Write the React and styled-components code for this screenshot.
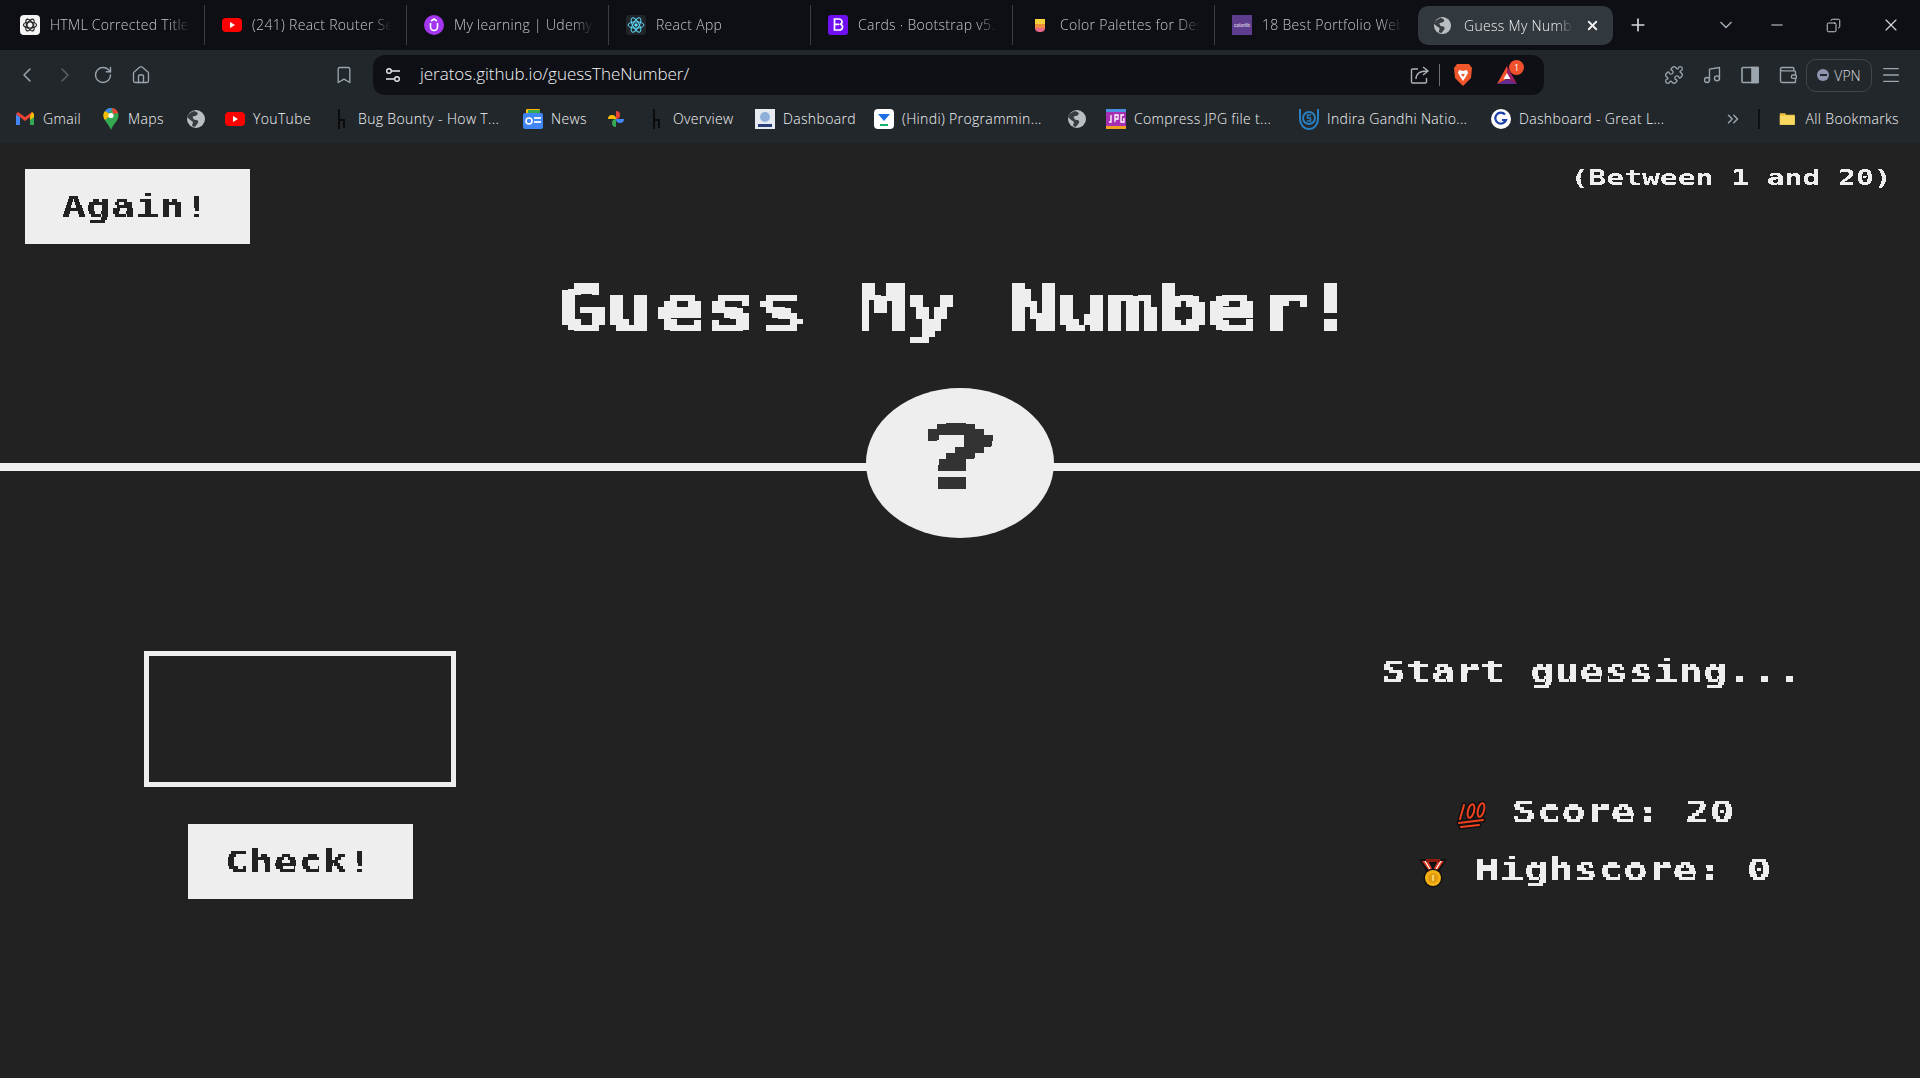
import React from "react";
import styled, { createGlobalStyle } from "styled-components";
import {
  ChevronLeft,
  ChevronRight,
  ChevronDown,
  ChevronsRight,
  RotateCw,
  Home,
  Bookmark,
  Puzzle,
  Music,
  Wallet,
  Menu,
  X,
  Plus,
  Minus,
  Copy,
} from "lucide-react";

const GlobalStyle = createGlobalStyle`
  html, body {
    margin: 0;
    padding: 0;
    background: #222;
    overflow: hidden;
  }
  * { box-sizing: border-box; }
`;

const pixelFont = `"DejaVu Sans Mono", "Liberation Mono", monospace`;
const uiFont = `"Open Sans", "Noto Sans", sans-serif`;

/* ---------- browser chrome ---------- */

const TabStrip = styled.div`
  height: 50px;
  background: #0d0f14;
  display: flex;
  align-items: center;
  padding-left: 3px;
`;

const Tab = styled.div`
  width: 202px;
  height: 40px;
  display: flex;
  align-items: center;
  gap: 10px;
  padding-left: 17px;
  padding-right: 14px;
  border-right: 1px solid ${(p) => (p.$last ? "transparent" : "#3a3f44")};
`;

const TabTitle = styled.span`
  font-family: ${uiFont};
  font-size: 14px;
  font-weight: 300;
  letter-spacing: 0.3px;
  line-height: 18px;
  color: #c4c8cc;
  white-space: nowrap;
  overflow: hidden;
  flex: 1;
  mask-image: linear-gradient(to right, #000 85%, transparent 100%);
`;

const ActiveTab = styled.div`
  width: 195px;
  height: 39px;
  margin-left: 1px;
  margin-top: 1px;
  border-radius: 10px;
  background: #31383e;
  display: flex;
  align-items: center;
  gap: 12px;
  padding: 0 13px 0 15px;
  ${TabTitle} {
    color: #f0f1f2;
  }
`;

const WindowControls = styled.div`
  flex: 1;
  display: flex;
  align-items: center;
  color: #d6d8da;
  padding-left: 14px;
`;

const WindowButton = styled.span`
  width: ${(p) => p.$w || 56}px;
  display: flex;
  justify-content: center;
  margin-left: ${(p) => p.$gap || 0}px;
`;

const Toolbar = styled.div`
  height: 50px;
  background: #22272b;
  display: flex;
  align-items: center;
  padding-left: 8px;
  color: #9aa5ad;
`;

const ToolButton = styled.span`
  width: 38px;
  height: 38px;
  display: flex;
  align-items: center;
  justify-content: center;
  flex: none;
  opacity: ${(p) => (p.$dim ? 0.45 : 1)};
`;

const BookmarkButton = styled(ToolButton)`
  margin-left: 165px;
  margin-right: 10px;
`;

const AddressBar = styled.div`
  width: 1171px;
  height: 40px;
  flex: none;
  border-radius: 12px;
  background: #0e1015;
  display: flex;
  align-items: center;
  padding: 0 26px 0 11px;
  color: #d4d6d8;
`;

const UrlText = styled.span`
  font-family: ${uiFont};
  font-size: 17px;
  font-weight: 300;
  letter-spacing: -0.03px;
  line-height: 22px;
  margin-top: -2px;
  color: #f4f5f6;
  padding-left: 18px;
  flex: 1;
`;

const AddressDivider = styled.span`
  width: 1px;
  height: 22px;
  background: #6a7076;
  margin: 0 13px 0 9px;
`;

const BatWrap = styled.span`
  position: relative;
  display: flex;
  margin-left: 23px;
`;

const BatBadge = styled.span`
  position: absolute;
  top: -5px;
  right: -6px;
  width: 15px;
  height: 15px;
  border-radius: 50%;
  background: #f0502c;
  color: #fff;
  font: 9px ${uiFont};
  display: flex;
  align-items: center;
  justify-content: center;
`;

const RightTools = styled.div`
  display: flex;
  align-items: center;
  padding-left: 111px;
`;

const VpnPill = styled.div`
  width: 66px;
  height: 33px;
  margin-left: -1px;
  border: 1px solid #3f464c;
  border-radius: 10px;
  display: flex;
  align-items: center;
  justify-content: center;
  gap: 5px;
  font: 300 14px ${uiFont};
  color: #d8dbde;
`;

const VpnDot = styled.span`
  width: 12px;
  height: 12px;
  border-radius: 50%;
  background: #8f94b0;
  display: flex;
  align-items: center;
  justify-content: center;
  &::after {
    content: "";
    width: 7px;
    height: 2px;
    background: #22272b;
  }
`;

const BookmarksBar = styled.div`
  height: 43px;
  background: #22272b;
  display: flex;
  align-items: center;
  padding: 0 0 5px 15px;
`;

const BookmarkItem = styled.div`
  width: ${(p) => p.$w}px;
  flex: none;
  display: flex;
  align-items: center;
  gap: ${(p) => p.$gap || 8}px;
`;

const BookmarkLabel = styled.span`
  font-family: ${uiFont};
  font-size: 14px;
  font-weight: 300;
  letter-spacing: 0.35px;
  line-height: 18px;
  color: #f4f5f6;
  white-space: nowrap;
`;

const OverflowButton = styled.span`
  margin-left: 52px;
  display: flex;
  color: #9aa5ad;
`;

const BarDivider = styled.span`
  width: 2px;
  height: 20px;
  background: #0e1015;
  margin: 0 19px 0 16px;
`;

/* ---------- the game ---------- */

/* no pixel font is installed: a bold mono is stretched to the wide pitch and
   then sampled into blocks by the filters in PixelFilters */
const Header = styled.header`
  height: 328px;
  border-bottom: 8px solid #eee;
  position: relative;
  padding-top: 26px;
`;

const TopRow = styled.div`
  display: flex;
  justify-content: space-between;
  align-items: flex-start;
  padding: 0 28px 0 25px;
`;

const Between = styled.p`
  margin: -3px 0 0;
  font: bold 21px ${pixelFont};
  color: #eee;
  white-space: nowrap;
  filter: url(#pixel-tiny);
  transform: scaleX(1.41);
  transform-origin: right center;
`;

const Title = styled.h1`
  margin: 27px auto 0;
  width: fit-content;
  font: bold 63px/76px ${pixelFont};
  color: #eee;
  white-space: nowrap;
  filter: url(#pixel-large);
  transform: translateX(-4px) scaleX(1.32);
`;

const Number = styled.div`
  position: absolute;
  left: 50%;
  bottom: -75px;
  width: 188px;
  height: 150px;
  margin-left: -94px;
  border-radius: 50%;
  background: #eee;
  display: flex;
  align-items: center;
  justify-content: center;
`;

const NumberMark = styled.span`
  font: bold 85px/1 ${pixelFont};
  color: #333;
  filter: url(#pixel-mark);
  transform: translate(-4px, -4px) scaleX(1.8);
`;

const PixelButton = styled.button`
  width: 225px;
  height: 75px;
  border: none;
  background: #eee;
  color: #222;
  padding: 0;
  font: bold 30px ${pixelFont};
  cursor: pointer;
  span {
    display: inline-block;
    filter: url(#pixel-small);
    transform: translateX(-2px) scaleX(1.36);
  }
`;

const Main = styled.main`
  display: grid;
  grid-template-columns: 600px 1fr 660px;
`;

const LeftColumn = styled.section`
  grid-column: 1;
  display: flex;
  flex-direction: column;
  align-items: center;
  padding-top: 180px;
  gap: 37px;
`;

const GuessInput = styled.input`
  width: 312px;
  height: 136px;
  border: 5px solid #eee;
  background: none;
  outline: none;
  color: #eee;
`;

const RightColumn = styled.section`
  grid-column: 3;
  display: flex;
  flex-direction: column;
  align-items: center;
  padding-top: 183px;
`;

const Message = styled.p`
  margin: 0 0 104px 4px;
  height: 36px;
  font: bold 30px/36px ${pixelFont};
  color: #eee;
  white-space: nowrap;
  filter: url(#pixel-small);
  transform: scaleX(1.37);
`;

const ScoreRow = styled.p`
  margin: 0 0 22px 10px;
  height: 36px;
  display: flex;
  align-items: center;
  justify-content: center;
  font: bold 30px/36px ${pixelFont};
  color: #eee;
  white-space: nowrap;
`;

const ScoreIcon = styled.svg`
  width: 30px;
  height: 30px;
  flex: none;
  margin-right: 26px;
  margin-top: 6px;
`;

const ScoreText = styled.span`
  display: inline-block;
  filter: url(#pixel-small);
  transform: scaleX(1.37);
  width: ${(p) => p.$w}px;
  text-align: center;
`;

const HiddenSvg = styled.svg`
  position: absolute;
  width: 0;
  height: 0;
`;

/* sample the text on a grid, threshold the samples, then grow each to a block */
const PixelFilter = ({ id, cellX, cellY, dotX, dotY, radiusX, radiusY }) => (
  <filter id={id} x="-5%" y="-5%" width="110%" height="110%" colorInterpolationFilters="sRGB">
    <feFlood x="2" y="2" width={dotX} height={dotY} floodColor="#000" />
    <feComposite width={cellX} height={cellY} />
    <feTile result="grid" />
    <feComposite in="SourceGraphic" in2="grid" operator="in" />
    <feComponentTransfer>
      <feFuncA type="discrete" tableValues="0 0 1 1" />
    </feComponentTransfer>
    <feMorphology operator="dilate" radius={`${radiusX} ${radiusY}`} />
  </filter>
);

const PixelFilters = () => (
  <HiddenSvg aria-hidden="true">
    <PixelFilter id="pixel-large" cellX={5} cellY={6} dotX={1} dotY={2} radiusX={2} radiusY={2} />
    <PixelFilter id="pixel-small" cellX={2} cellY={3} dotX={2} dotY={1} radiusX={0.01} radiusY={1} />
    <PixelFilter id="pixel-tiny" cellX={2} cellY={2} dotX={2} dotY={2} radiusX={0.01} radiusY={0.01} />
    <PixelFilter id="pixel-mark" cellX={6} cellY={6} dotX={2} dotY={2} radiusX={2} radiusY={2} />
  </HiddenSvg>
);

/* ---------- favicons ---------- */

const GlobeIcon = ({ size = 20 }) => (
  <svg width={size} height={size} viewBox="0 0 20 20">
    <circle cx="10" cy="10" r="9" fill="#b9bec2" />
    <path d="M8 2c3 1 5 2 3 4S6 6 7 9s4 1 5 3-2 4-3 6l-3-1 1-4-4-3-2-2c1-3 4-5 7-6z" fill="#22272b" opacity=".85" />
  </svg>
);

const ChatIcon = () => (
  <svg width="20" height="20" viewBox="0 0 20 20">
    <rect width="20" height="20" rx="4" fill="#f4f4f4" />
    <g fill="none" stroke="#222" strokeWidth="1.2">
      <ellipse cx="10" cy="10" rx="6.5" ry="3" />
      <ellipse cx="10" cy="10" rx="6.5" ry="3" transform="rotate(60 10 10)" />
      <ellipse cx="10" cy="10" rx="6.5" ry="3" transform="rotate(120 10 10)" />
    </g>
  </svg>
);

const YoutubeIcon = () => (
  <svg width="20" height="20" viewBox="0 0 20 20">
    <rect y="3" width="20" height="14" rx="4" fill="#f00" />
    <path d="M8 7l5 3-5 3z" fill="#fff" />
  </svg>
);

const UdemyIcon = () => (
  <svg width="20" height="20" viewBox="0 0 20 20">
    <circle cx="10" cy="10" r="10" fill="#a435f0" />
    <path d="M6.5 8v4a3.5 3.5 0 0 0 7 0V8M7 6l3-2 3 2" fill="none" stroke="#fff" strokeWidth="1.6" />
  </svg>
);

const ReactIcon = () => (
  <svg width="20" height="20" viewBox="0 0 20 20">
    <rect width="20" height="20" rx="3" fill="#20252a" />
    <circle cx="10" cy="10" r="1.7" fill="#61dafb" />
    <g fill="none" stroke="#61dafb" strokeWidth="1">
      <ellipse cx="10" cy="10" rx="8" ry="3.2" />
      <ellipse cx="10" cy="10" rx="8" ry="3.2" transform="rotate(60 10 10)" />
      <ellipse cx="10" cy="10" rx="8" ry="3.2" transform="rotate(120 10 10)" />
    </g>
  </svg>
);

const BootstrapIcon = () => (
  <svg width="20" height="20" viewBox="0 0 20 20">
    <rect width="20" height="20" rx="3" fill="#7010f2" />
    <path d="M6.5 4h4.500a2.800 2.800 0 0 1 1.600 5.200A3 3 0 0 1 11.500 15h-5zM6.500 9.400h4.500" fill="none" stroke="#fff" strokeWidth="1.700" />
  </svg>
);

const PaletteIcon = () => (
  <svg width="20" height="20" viewBox="0 0 20 20">
    <path d="M5 4h10v5H5z" fill="#f0d13c" />
    <path d="M5 9h10v4H5z" fill="#ef8d3c" />
    <path d="M5 13h10c0 3-2 4-5 4s-5-1-5-4z" fill="#e8648a" />
  </svg>
);

const ColorlibIcon = () => (
  <svg width="20" height="20" viewBox="0 0 20 20">
    <rect width="20" height="20" fill="#5f3d8e" />
    <text x="10" y="11.500" textAnchor="middle" fontSize="5" fontFamily="Liberation Sans, sans-serif" fill="#f0eaf8">
      colorlib
    </text>
  </svg>
);

const GmailIcon = () => (
  <svg width="20" height="20" viewBox="0 0 20 20">
    <path d="M1 5v11h4V8z" fill="#4285f4" />
    <path d="M19 5v11h-4V8z" fill="#34a853" />
    <path d="M1 5l9 7 9-7-2-2-7 5-7-5z" fill="#ea4335" />
    <path d="M17 3l2 2v3l-4 3V7z" fill="#fbbc04" />
  </svg>
);

const MapsIcon = () => (
  <svg width="18" height="24" viewBox="1 0 18 24">
    <path d="M10 1a7.500 7.500 0 0 1 7.500 7.500C17.500 14 12 17 10 23 8 17 2.500 14 2.500 8.500A7.500 7.500 0 0 1 10 1z" fill="#34a853" />
    <path d="M4 4l6 4-6 5a7 7 0 0 1 0-9z" fill="#fbbc04" />
    <path d="M4 4a7.500 7.500 0 0 1 7-3L8 6z" fill="#4285f4" />
    <path d="M11 1a7.500 7.500 0 0 1 6 5l-5 1z" fill="#ea4335" />
    <circle cx="10" cy="8.500" r="2.600" fill="#fff" />
  </svg>
);

const HackerIcon = () => (
  <svg width="15" height="24" viewBox="2 0 15 24">
    <path d="M5 2h2v20H5z" fill="#0b0b0b" />
    <path d="M7 12h5v9h-2v-7H7z" fill="#0b0b0b" />
  </svg>
);

const NewsIcon = () => (
  <svg width="20" height="20" viewBox="0 0 20 20">
    <rect x="3" y="0" width="14" height="6" rx="1" fill="#fbbc04" />
    <rect x="5" y="1" width="12" height="5" fill="#34a853" />
    <rect y="4" width="20" height="16" rx="2" fill="#4285f4" />
    <rect x="11" y="8" width="7" height="2" fill="#e8f0fe" />
    <rect x="11" y="12" width="7" height="2" fill="#e8f0fe" />
    <circle cx="6" cy="12" r="3" fill="none" stroke="#fff" strokeWidth="1.600" />
  </svg>
);

const PinwheelIcon = () => (
  <svg width="20" height="20" viewBox="0 0 20 20">
    <path d="M10 10V2a4 4 0 0 1 0 8z" fill="#ea4335" />
    <path d="M10 10h8a4 4 0 0 1-8 0z" fill="#4285f4" />
    <path d="M10 10v8a4 4 0 0 1 0-8z" fill="#34a853" />
    <path d="M10 10H2a4 4 0 0 1 8 0z" fill="#fbbc04" />
  </svg>
);

const IantIcon = () => (
  <svg width="20" height="20" viewBox="0 0 20 20">
    <rect width="20" height="20" fill="#e6ebf2" />
    <circle cx="10" cy="8" r="5" fill="#8fb0d8" />
    <rect x="3" y="15" width="14" height="3" fill="#2a3f78" />
  </svg>
);

const ScalerIcon = () => (
  <svg width="20" height="20" viewBox="0 0 20 20">
    <rect width="20" height="20" rx="4" fill="#fff" />
    <path d="M4 5h12l-6 7z" fill="#1f6fe5" />
    <path d="M6 15h8v2H6z" fill="#17b26a" />
  </svg>
);

const JpgIcon = () => (
  <svg width="20" height="20" viewBox="0 0 20 20">
    <rect width="20" height="20" fill="#a62fb4" />
    <rect width="20" height="3" fill="#4a8fe0" />
    <rect y="17" width="20" height="3" fill="#f0a020" />
    <path d="M5 6v7H3M9 13V6h3v4H9M18 6h-3v7h3v-3h-1" fill="none" stroke="#fff" strokeWidth="1.300" />
  </svg>
);

const IgnouIcon = () => (
  <svg width="20" height="24" viewBox="0 0 20 24">
    <path d="M1 2v10a9 10 0 0 0 18 0V2" fill="none" stroke="#2a7fc0" strokeWidth="2" />
    <circle cx="10" cy="11" r="6" fill="none" stroke="#2a7fc0" strokeWidth="2" />
    <path d="M12 8H8.500v3h3v3H8" fill="none" stroke="#2a7fc0" strokeWidth="1.500" />
  </svg>
);

const GreatIcon = () => (
  <svg width="20" height="20" viewBox="0 0 20 20">
    <circle cx="10" cy="10" r="10" fill="#fff" />
    <path d="M14 5.500A5.500 5.500 0 1 0 15 11h-4" fill="none" stroke="#1b3fa8" strokeWidth="2.200" />
  </svg>
);

const FolderIcon = () => (
  <svg width="20" height="20" viewBox="0 0 20 20">
    <path d="M1 3h6l2 2h10v12H1z" fill="#f0c040" />
    <path d="M1 6h18v11H1z" fill="#f8d860" />
  </svg>
);

const BraveIcon = () => (
  <svg width="20" height="24" viewBox="0 0 20 24">
    <path d="M4 1h12l3 4-1 10-8 8-8-8L1 5z" fill="#f1562b" />
    <path d="M6 7l4 1 4-1 1 3-3 5-2 3-2-3-3-5z" fill="#fff" />
    <path d="M8 11h4l-2 3z" fill="#f1562b" />
  </svg>
);

const BatIcon = () => (
  <svg width="22" height="20" viewBox="0 0 22 20">
    <path d="M11 1L1 19l10-5z" fill="#f5502c" />
    <path d="M11 1l10 18-10-5z" fill="#9e1f63" />
    <path d="M1 19h20l-10-5z" fill="#662d91" />
    <path d="M11 8l3.500 6h-7z" fill="#fff" />
  </svg>
);

const TuneIcon = () => (
  <svg width="18" height="18" viewBox="0 0 18 18" fill="none" stroke="#e6e8ea" strokeWidth="1.400">
    <circle cx="5" cy="5" r="2.300" />
    <path d="M7.500 5H16M2 13h8.500" />
    <circle cx="13" cy="13" r="2.300" />
  </svg>
);

const ShareIcon = () => (
  <svg width="20" height="20" viewBox="0 0 20 20" fill="none" stroke="#a9b1b8" strokeWidth="1.400">
    <path d="M8 4H2.500a1 1 0 0 0-1 1v12a1 1 0 0 0 1 1h13a1 1 0 0 0 1-1v-4" />
    <path d="M6 14c0-5 4-8 11-8M13 2l5 4-5 4" />
  </svg>
);

const SidebarIcon = () => (
  <svg width="20" height="20" viewBox="0 0 20 20" fill="none" stroke="#9aa5ad" strokeWidth="1.600">
    <rect x="2" y="2.500" width="16" height="15" rx="1" />
    <rect x="12" y="2.500" width="6" height="15" fill="#9aa5ad" />
  </svg>
);

const tabs = [
  { title: "HTML Corrected Title", icon: <ChatIcon /> },
  { title: "(241) React Router Setup", icon: <YoutubeIcon /> },
  { title: "My learning | Udemy", icon: <UdemyIcon /> },
  { title: "React App", icon: <ReactIcon /> },
  { title: "Cards · Bootstrap v5.3", icon: <BootstrapIcon /> },
  { title: "Color Palettes for Designers", icon: <PaletteIcon /> },
  { title: "18 Best Portfolio Websites", icon: <ColorlibIcon />, last: true },
];

const bookmarks = [
  { label: "Gmail", icon: <GmailIcon />, w: 87 },
  { label: "Maps", icon: <MapsIcon />, w: 84 },
  { icon: <GlobeIcon />, w: 39 },
  { label: "YouTube", icon: <YoutubeIcon />, w: 110 },
  { label: "Bug Bounty - How T...", icon: <HackerIcon />, w: 188 },
  { label: "News", icon: <NewsIcon />, w: 83 },
  { icon: <PinwheelIcon />, w: 44 },
  { label: "Overview", icon: <HackerIcon />, w: 105 },
  { label: "Dashboard", icon: <IantIcon />, w: 119 },
  { label: "(Hindi) Programmin...", icon: <ScalerIcon />, w: 193 },
  { icon: <GlobeIcon />, w: 39 },
  { label: "Compress JPG file t...", icon: <JpgIcon />, w: 193 },
  { label: "Indira Gandhi Natio...", icon: <IgnouIcon />, w: 192 },
  { label: "Dashboard - Great L...", icon: <GreatIcon />, w: 181 },
];

function BrowserChrome() {
  return (
    <div>
      <TabStrip>
        {tabs.map(({ title, icon, last }) => (
          <Tab key={title} $last={last}>
            {icon}
            <TabTitle>{title}</TabTitle>
          </Tab>
        ))}
        <ActiveTab>
          <GlobeIcon size={19} />
          <TabTitle>Guess My Number!</TabTitle>
          <X size={15} color="#f0f0f0" strokeWidth={3} />
        </ActiveTab>
        <WindowControls>
          <WindowButton $w={22}>
            <Plus size={20} />
          </WindowButton>
          <WindowButton $w={22} $gap={66}>
            <ChevronDown size={20} color="#9aa5ad" />
          </WindowButton>
          <WindowButton $w={20} $gap={30}>
            <Minus size={18} strokeWidth={1.4} />
          </WindowButton>
          <WindowButton $w={20} $gap={36}>
            <Copy size={15} strokeWidth={1.5} style={{ transform: "scaleX(-1)" }} />
          </WindowButton>
          <WindowButton $w={20} $gap={38}>
            <X size={20} strokeWidth={1.4} />
          </WindowButton>
        </WindowControls>
      </TabStrip>
      <Toolbar>
        <ToolButton>
          <ChevronLeft size={24} strokeWidth={1.5} />
        </ToolButton>
        <ToolButton $dim>
          <ChevronRight size={24} strokeWidth={1.5} />
        </ToolButton>
        <ToolButton>
          <RotateCw size={20} strokeWidth={1.7} />
        </ToolButton>
        <ToolButton>
          <Home size={20} strokeWidth={1.6} />
        </ToolButton>
        <BookmarkButton>
          <Bookmark size={20} strokeWidth={1.6} />
        </BookmarkButton>
        <AddressBar>
          <TuneIcon />
          <UrlText>jeratos.github.io/guessTheNumber/</UrlText>
          <ShareIcon />
          <AddressDivider />
          <BraveIcon />
          <BatWrap>
            <BatIcon />
            <BatBadge>1</BatBadge>
          </BatWrap>
        </AddressBar>
        <RightTools>
          <ToolButton>
            <Puzzle size={20} strokeWidth={1.6} />
          </ToolButton>
          <ToolButton>
            <Music size={20} strokeWidth={1.6} />
          </ToolButton>
          <ToolButton>
            <SidebarIcon />
          </ToolButton>
          <ToolButton>
            <Wallet size={20} strokeWidth={1.6} />
          </ToolButton>
          <VpnPill>
            <VpnDot />
            VPN
          </VpnPill>
          <ToolButton>
            <Menu size={22} strokeWidth={1.5} />
          </ToolButton>
        </RightTools>
      </Toolbar>
      <BookmarksBar>
        {bookmarks.map(({ label, icon, w }, i) => (
          <BookmarkItem key={i} $w={w}>
            {icon}
            {label && <BookmarkLabel>{label}</BookmarkLabel>}
          </BookmarkItem>
        ))}
        <OverflowButton>
          <ChevronsRight size={18} />
        </OverflowButton>
        <BarDivider />
        <BookmarkItem $w={120} $gap={10}>
          <FolderIcon />
          <BookmarkLabel>All Bookmarks</BookmarkLabel>
        </BookmarkItem>
      </BookmarksBar>
    </div>
  );
}

export default function App() {
  return (
    <>
      <GlobalStyle />
      <PixelFilters />
      <BrowserChrome />
      <Header>
        <TopRow>
          <PixelButton>
            <span>Again!</span>
          </PixelButton>
          <Between>(Between 1 and 20)</Between>
        </TopRow>
        <Title>Guess My Number!</Title>
        <Number>
          <NumberMark>?</NumberMark>
        </Number>
      </Header>
      <Main>
        <LeftColumn>
          <GuessInput type="number" />
          <PixelButton>
            <span>Check!</span>
          </PixelButton>
        </LeftColumn>
        <RightColumn>
          <Message>Start guessing...</Message>
          <ScoreRow>
            <ScoreIcon viewBox="0 0 30 30" role="img" aria-label="100">
              <g fill="none" stroke="#111" strokeWidth="5" strokeLinecap="round">
                <path d="M8 5L4 19" />
                <ellipse cx="15" cy="11" rx="3" ry="7" transform="rotate(15 15 11)" />
                <ellipse cx="25" cy="10" rx="3" ry="7" transform="rotate(15 25 10)" />
                <path d="M3 23L27 20M5 27L23 25" />
              </g>
              <g fill="none" stroke="#f0401e" strokeWidth="2" strokeLinecap="round">
                <path d="M8 5L4 19" />
                <ellipse cx="15" cy="11" rx="3" ry="7" transform="rotate(15 15 11)" />
                <ellipse cx="25" cy="10" rx="3" ry="7" transform="rotate(15 25 10)" />
                <path d="M3 23L27 20M5 27L23 25" />
              </g>
            </ScoreIcon>
            <ScoreText $w={222}>Score: 20</ScoreText>
          </ScoreRow>
          <ScoreRow>
            <ScoreIcon viewBox="0 0 30 30" role="img" aria-label="medal">
              <path d="M1 1h28l-9 15h-10z" fill="#111" />
              <path d="M4 3h6l6 11h-4z" fill="#e03a20" />
              <path d="M26 3h-6l-6 11h4z" fill="#e03a20" />
              <path d="M7 3l6 10M23 3l-6 10" stroke="#fff" strokeWidth="1.200" />
              <path d="M8 1h14v3H8z" fill="#8e1a12" />
              <circle cx="15" cy="20" r="9.500" fill="#111" />
              <circle cx="15" cy="20" r="8" fill="#f5b014" />
              <circle cx="15" cy="20" r="5" fill="#e09a10" />
              <path d="M14 17h2v6h-2z" fill="#f8d060" />
            </ScoreIcon>
            <ScoreText $w={298}>Highscore: 0</ScoreText>
          </ScoreRow>
        </RightColumn>
      </Main>
    </>
  );
}
